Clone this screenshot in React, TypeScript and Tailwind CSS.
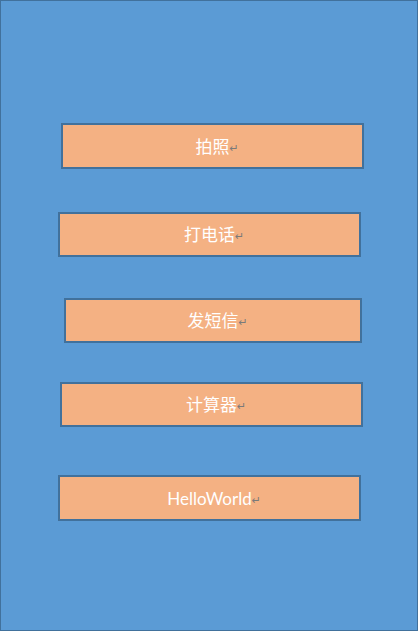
const buttons = [
  { label: '拍照', cls: 'mt-0 ml-[60px] w-[303px] h-[46px]' },
  { label: '打电话', cls: 'mt-[43px] ml-[57px] w-[303px] h-[45px]' },
  { label: '发短信', cls: 'mt-[41px] ml-[63px] w-[298px] h-[45px]' },
  { label: '计算器', cls: 'mt-[39px] ml-[59px] w-[303px] h-[45px]' },
  { label: 'HelloWorld', cls: 'mt-[48px] ml-[57px] w-[303px] h-[46px]' },
]

function SlideButton({ label, cls }: { label: string; cls: string }) {
  return (
    <div className={`flex items-center justify-center border-2 border-[#41719c] bg-[#f4b183] ${cls}`}>
      <span className="text-[17px] leading-none text-white">{label}</span>
      <span className="inline-block w-0 overflow-visible whitespace-nowrap pt-[4px] font-['DejaVu_Sans',sans-serif] text-[11px] leading-none text-[#7a7a7a]">
        ↵
      </span>
    </div>
  )
}

export default function App() {
  return (
    <div
      className="flex h-[631px] w-[418px] flex-col border border-[#41719c] bg-[#5b9bd5] pt-[122px]"
      style={{ fontFamily: 'Lato, "Noto Sans CJK SC", "Noto Sans", sans-serif' }}
    >
      {buttons.map(b => (
        <SlideButton key={b.label} label={b.label} cls={b.cls} />
      ))}
    </div>
  )
}
